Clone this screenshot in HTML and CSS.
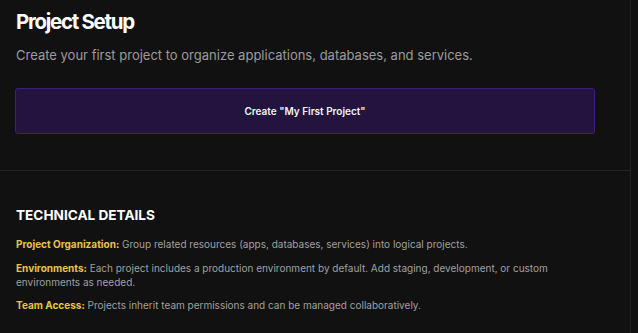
FILE: index.html
```html
<!DOCTYPE html>
<html lang="en">
<head>
    <meta charset="UTF-8">
    <meta name="viewport" content="width=device-width, initial-scale=1.0">
    <title>Project Setup</title>
    <link rel="stylesheet" href="styles.css">
</head>
<body>
    <div class="panel">
        <!-- Setup -->
        <section class="setup">
            <h1 class="title">Project Setup</h1>
            <p class="subtitle">Create your first project to organize applications, databases, and services.</p>
            <button class="create-btn" type="button">Create "My First Project"</button>
        </section>

        <!-- Details -->
        <section class="details">
            <h2 class="details-title">TECHNICAL DETAILS</h2>
            <p class="detail"><span class="detail-key">Project Organization:</span> Group related resources (apps, databases, services) into logical projects.</p>
            <p class="detail"><span class="detail-key">Environments:</span> Each project includes a production environment by default. Add staging, development, or custom environments as needed.</p>
            <p class="detail"><span class="detail-key">Team Access:</span> Projects inherit team permissions and can be managed collaboratively.</p>
        </section>
    </div>
</body>
</html>
```

FILE: styles.css
```css
body {
    margin: 0;
    background: #111111;
    font-family: Inter, "Noto Sans", sans-serif;
    color: #a3a3a3;
}
.panel {
    width: 630px;
    min-height: 333px;
    border-right: 1px solid #232323;
}
.setup {
    padding: 8px 35px 36px 15px;
    border-bottom: 1px solid #232323;
}
.title {
    margin: 0 0 0 1px;
    font-size: 20.5px;
    line-height: 27px;
    font-weight: 700;
    letter-spacing: -1.3px;
    color: #ffffff;
}
.subtitle {
    margin: 11px 0 24px 1px;
    font-size: 13px;
    line-height: 18px;
    color: #9c9c9c;
}
.create-btn {
    display: block;
    width: 100%;
    height: 46px;
    background: #22133f;
    border: 1px solid #3d1f7e;
    border-radius: 3px;
    color: #f2f2f2;
    font-family: Inter, "Noto Sans", sans-serif;
    font-size: 10px;
    font-weight: 600;
    cursor: pointer;
}
.details {
    padding: 35px 35px 20px 16px;
}
.details-title {
    margin: 0 0 13px;
    font-size: 13.6px;
    line-height: 18px;
    font-weight: 700;
    color: #ffffff;
}
.detail {
    margin: 0 0 9.5px;
    font-size: 10px;
    line-height: 14px;
    color: #a0a0a0;
}
.detail-key {
    font-weight: 700;
    color: #e8c548;
}
```
